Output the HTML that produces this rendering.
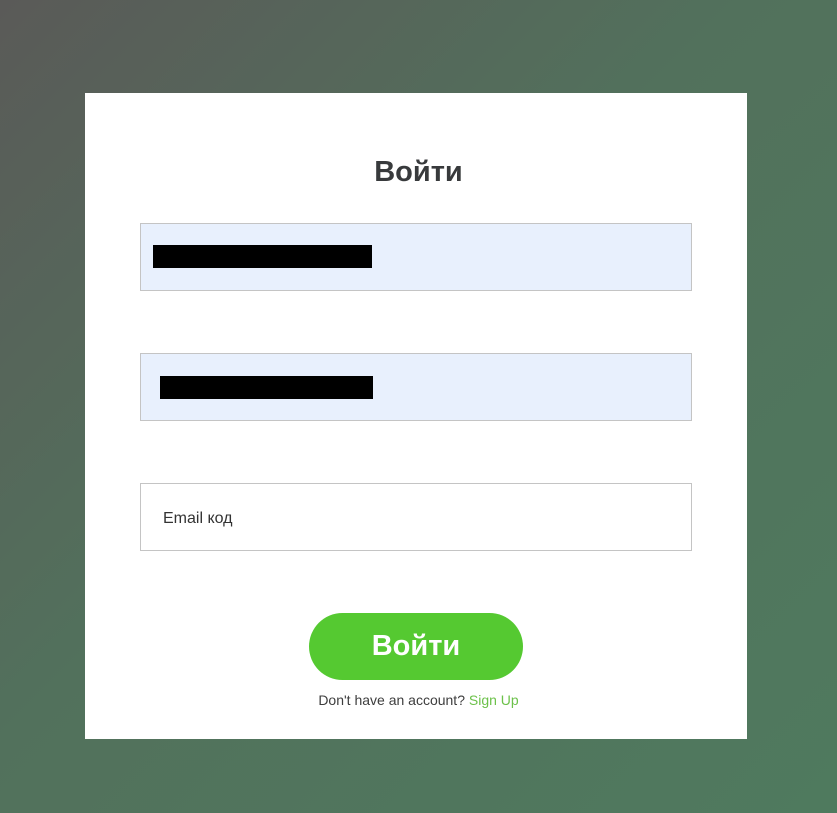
<!DOCTYPE html>
<html><head><meta charset="utf-8"><style>
html,body{margin:0;width:837px;height:813px;overflow:hidden}
body{background:linear-gradient(135deg,#5a5a58 0%,#52715c 45%,#4f7a5e 100%);font-family:"Liberation Sans","DejaVu Sans",sans-serif;position:relative}
.card{position:absolute;left:85px;top:93px;width:662px;height:646px;background:#fff}
h1{position:absolute;left:0;right:0;top:156px;margin:0;text-align:center;font-size:29px;font-weight:bold;color:#383a3c}
.in{position:absolute;left:140px;width:550px;height:66px;border:1px solid #c4c4c4;background:#e8f0fd}
.blk{position:absolute;background:#000;height:23px}
.btn{position:absolute;left:309px;top:613px;width:214px;height:67px;border-radius:34px;background:#55c931;color:#fff;font-weight:bold;font-size:29px;text-align:center;line-height:67px}
.t{position:absolute;left:0;width:837px;text-align:center;top:692px;font-size:14px;color:#3d3d3d}
</style></head><body>
<div class="card"></div>
<h1>Войти</h1>
<div class="in" style="top:223px"></div>
<div class="blk" style="left:153px;top:245px;width:219px"></div>
<div class="in" style="top:353px"></div>
<div class="blk" style="left:160px;top:376px;width:213px"></div>
<div class="in" style="top:483px;background:#fff"><span style="position:absolute;left:22px;top:26px;font-size:16px;color:#333">Email код</span></div>
<div class="btn">Войти</div>
<div class="t">Don't have an account? <span style="color:#6cc14a">Sign Up</span></div>
</body></html>
